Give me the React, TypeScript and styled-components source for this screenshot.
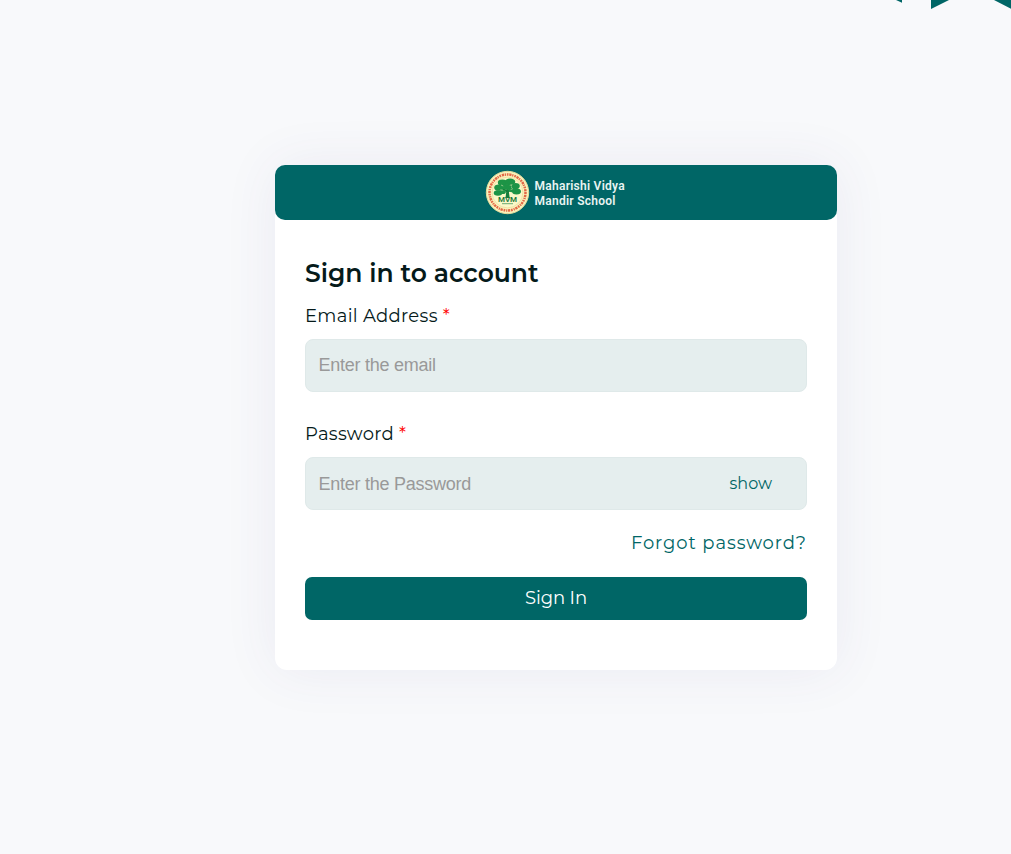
import React, { useState } from 'react';
import styled, { createGlobalStyle } from 'styled-components';

const teal = '#006666';

const GlobalStyle = createGlobalStyle`
  *, *::before, *::after { box-sizing: border-box; }
  body {
    margin: 0;
    background: #f8f9fb;
    color: #051a1a;
    font-family: Montserrat, Inter, sans-serif;
    overflow: hidden;
  }
`;

const Page = styled.main`
  position: relative;
  display: flex;
  flex-direction: column;
  align-items: center;
  height: 854px;
  padding: 165px 0 0 101px;
`;

const Decoration = styled.svg`
  position: absolute;
  top: 0;
  right: 0;
  fill: ${teal};
`;

const Card = styled.section`
  width: 562px;
  height: 505px;
  border-radius: 12px;
  background: #fff;
  box-shadow: 0 0 54px rgba(75, 70, 140, 0.08);
`;

const Banner = styled.header`
  display: flex;
  align-items: center;
  height: 55px;
  padding-left: 210px;
  border-radius: 10px;
  background: ${teal};
  color: #e9f4f2;
`;

const SchoolName = styled.div`
  margin: 2px 0 0 4.5px;
  font: 600 12px/15px Roboto, sans-serif;
  letter-spacing: 0.26px;
`;

const Form = styled.form`
  display: flex;
  flex-direction: column;
  padding: 38px 30px 0;
`;

const Title = styled.h1`
  margin: 0;
  font-size: 25px;
  font-weight: 600;
  line-height: 31px;
`;

const Label = styled.label<{ $gap: number }>`
  margin-top: ${(p) => p.$gap}px;
  font-size: 18px;
  font-weight: 450;
  line-height: 24px;
  letter-spacing: 0.3px;
`;

const Required = styled.span`
  color: #f00;
`;

const Field = styled.div`
  display: flex;
  align-items: center;
  height: 53px;
  margin-top: 11px;
  padding: 0 34px 0 12.5px;
  border: 1px solid #dfe9e9;
  border-radius: 8px;
  background: #e5eeee;
`;

const Input = styled.input<{ $lift?: number }>`
  flex: 1;
  min-width: 0;
  padding: 0 0 ${(p) => p.$lift ?? 0}px;
  border: 0;
  outline: 0;
  background: transparent;
  font: 18px/24px "Liberation Sans", Arial, sans-serif;
  letter-spacing: -0.26px;

  &::placeholder {
    color: #999;
    opacity: 1;
  }
`;

const Toggle = styled.button`
  padding: 0;
  border: 0;
  background: none;
  color: ${teal};
  font: 400 16px/20px Montserrat, Inter, sans-serif;
`;

const Forgot = styled.a`
  align-self: flex-end;
  margin-top: 21px;
  color: ${teal};
  font-size: 18px;
  line-height: 24px;
  letter-spacing: 0.92px;
  text-decoration: none;
`;

const Submit = styled.button`
  height: 43px;
  margin-top: 22px;
  padding: 0 0 2px;
  border: 0;
  border-radius: 7px;
  background: ${teal};
  color: #fff;
  font: 400 18px/24px Montserrat, Inter, sans-serif;
  letter-spacing: -0.1px;
`;

function Emblem() {
  return (
    <svg width="45" height="45" viewBox="0 0 45 45" aria-hidden="true">
      <circle cx="22.5" cy="22.5" r="21.2" fill="#faf3bd" stroke="#e3dc9b" strokeWidth="1" />
      <circle cx="22.5" cy="22.5" r="18" fill="none" stroke="#e26947" strokeWidth="2.5" strokeDasharray="1.7 0.8 2.3 0.7 1.2 0.9" />
      <circle cx="22.5" cy="22.5" r="15.4" fill="#fbf8c9" stroke="#ecd996" strokeWidth="0.7" />
      <path d="M20.5 28 21.2 22l-5.4-3.6 1-1 4.7 2.4.2-5h1.8l.2 5 4.9-2.6.9 1.1-5.6 3.7.8 6Z" fill="#147d3c" />
      <g fill="#1d9446">
        <ellipse cx="17.4" cy="12.7" rx="4.6" ry="3.1" />
        <ellipse cx="25.1" cy="11.8" rx="5.2" ry="3.3" />
        <ellipse cx="30.6" cy="16" rx="4.2" ry="3.1" />
        <ellipse cx="13.8" cy="17.7" rx="4.6" ry="3.1" />
        <ellipse cx="21.8" cy="16.8" rx="4.8" ry="2.9" />
        <ellipse cx="31.5" cy="21.5" rx="4.5" ry="2.9" />
        <ellipse cx="13" cy="23" rx="4.3" ry="2.7" />
        <ellipse cx="27" cy="20" rx="3.6" ry="2.2" />
        <ellipse cx="17.9" cy="21.9" rx="3" ry="2" />
      </g>
      <path d="m16 15 2.2 1m6.6-.7 2.5-.7m-11.8 5 2.2.8m8-.8 2.3-1" stroke="#b8d69a" strokeWidth=".7" />
      <text x="22.5" y="31.5" textAnchor="middle" fill="#247a3c" fontFamily="Roboto, sans-serif" fontSize="8" fontWeight="600">MVM</text>
      <path d="M17 33.7h11" stroke="#6bab70" strokeWidth="1" />
    </svg>
  );
}

export default function App() {
  const [visible, setVisible] = useState(false);

  return (
    <>
      <GlobalStyle />
      <Page>
        <Decoration width="116" height="10" viewBox="0 0 116 10" aria-hidden="true">
          <path d="M1 0h6v2.7ZM36 0h18L36 9ZM99 0h17v8.7Z" />
        </Decoration>
        <Card>
          <Banner>
            <Emblem />
            <SchoolName>Maharishi Vidya<br />Mandir School</SchoolName>
          </Banner>
          <Form onSubmit={(e) => e.preventDefault()}>
            <Title>Sign in to account</Title>
            <Label htmlFor="email" $gap={15}>
              Email Address <Required>*</Required>
            </Label>
            <Field>
              <Input id="email" type="email" placeholder="Enter the email" $lift={2} />
            </Field>
            <Label htmlFor="password" $gap={30}>
              Password <Required>*</Required>
            </Label>
            <Field>
              <Input id="password" type={visible ? 'text' : 'password'} placeholder="Enter the Password" />
              <Toggle type="button" onClick={() => setVisible(!visible)}>
                show
              </Toggle>
            </Field>
            <Forgot>Forgot password?</Forgot>
            <Submit type="submit">Sign In</Submit>
          </Form>
        </Card>
      </Page>
    </>
  );
}
